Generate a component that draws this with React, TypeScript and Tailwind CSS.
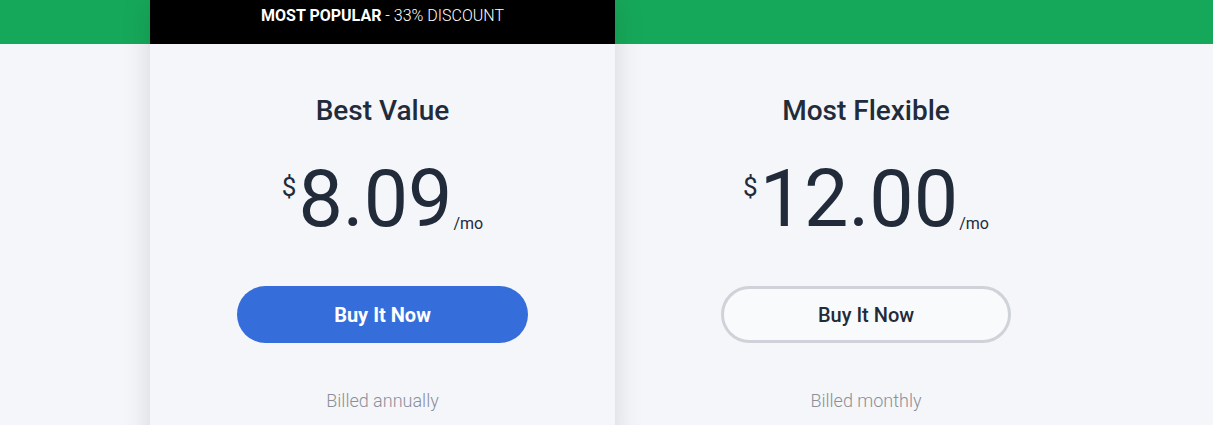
import React from 'react'

interface Plan {
  title: string
  price: string
  billed: string
  featured?: boolean
}

const plans: Plan[] = [
  { title: 'Best Value', price: '8.09', billed: 'Billed annually', featured: true },
  { title: 'Most Flexible', price: '12.00', billed: 'Billed monthly' },
]

function PlanCard({ plan }: { plan: Plan }) {
  return (
    <div
      className={
        plan.featured
          ? 'relative z-10 flex w-[465px] flex-col bg-[#f5f6fa] shadow-[0_0_28px_rgba(0,0,0,0.13)]'
          : 'flex w-[502px] flex-col'
      }
    >
      {/* Header strip */}
      {plan.featured ? (
        <div className="flex h-[44px] items-start justify-center bg-black pt-[6px] text-[16px] leading-[20px] text-white">
          <span className="font-bold">MOST POPULAR</span>
          <span className="font-light">&nbsp;- 33% DISCOUNT</span>
        </div>
      ) : (
        <div className="h-[44px]" />
      )}

      <div className="flex flex-col items-center bg-[#f5f6fa] pb-10">
        {/* Title */}
        <h2 className="mt-[51px] text-[28px] font-medium leading-[32px] text-[#222b3a]">
          {plan.title}
        </h2>

        {/* Price */}
        <div className="mt-[33px] flex items-baseline text-[#222b3a]">
          <span className="mt-[14px] self-start text-[26px] font-normal leading-none">$</span>
          <span className="ml-[2px] text-[79px] font-normal leading-none">{plan.price}</span>
          <span className="relative top-[3px] ml-[1px] text-[16px] leading-none">/mo</span>
        </div>

        {/* Button */}
        <button
          className={
            plan.featured
              ? 'mt-[47px] h-[57px] w-[291px] rounded-full bg-[#356ddb] text-[20px] font-bold text-white'
              : 'mt-[47px] h-[57px] w-[290px] rounded-full border-[3px] border-[#d0d2d9] bg-[#f9fafc] text-[20px] font-medium text-[#222b3a]'
          }
        >
          Buy It Now
        </button>

        {/* Billing note */}
        <p className="mt-[46px] text-[18px] font-light leading-[24px] text-[#8a8f99]">{plan.billed}</p>
      </div>
    </div>
  )
}

export default function App() {
  return (
    <div
      className="h-[425px] w-full overflow-hidden bg-[linear-gradient(to_bottom,#16a85a_44px,#f5f6fa_44px)]"
      style={{ fontFamily: 'Roboto, "Noto Sans", sans-serif' }}
    >
      <div className="flex pl-[150px]">
        {plans.map((plan) => (
          <PlanCard key={plan.title} plan={plan} />
        ))}
      </div>
    </div>
  )
}
